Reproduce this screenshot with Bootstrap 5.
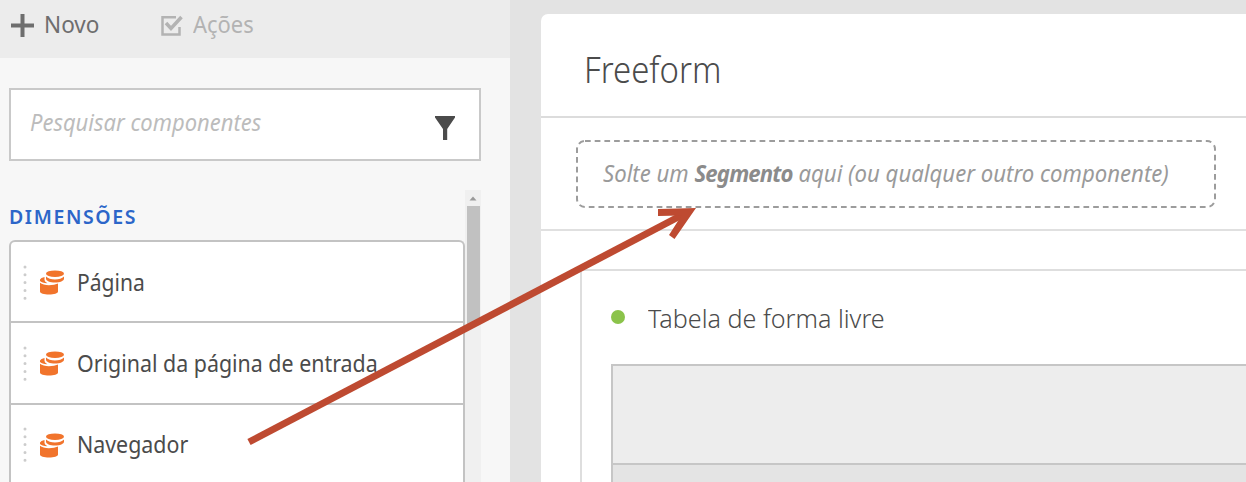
<!DOCTYPE html>
<html lang="pt-BR">
<head>
<meta charset="utf-8">
<meta name="viewport" content="width=device-width, initial-scale=1">
<title>Freeform</title>
<link href="https://cdn.jsdelivr.net/npm/bootstrap@5.3.0/dist/css/bootstrap.min.css" rel="stylesheet">
<style>
body{height:482px;background:#e3e3e3;font-family:"Noto Sans",sans-serif;font-size:23px;font-stretch:semi-condensed;line-height:30px;color:#4b4b4b;white-space:nowrap}
.side{width:510px;background:#f7f7f7}
.topbar{height:58px;background:#ececec;padding:9px 0 0 10px;color:#6e6e6e}
.topbar .novo{width:149px}
.off{color:#b3b3b3}
.search{width:472px;height:73px;margin:30px 0 0 9px;border:2px solid #c9c9c9;background:#fff;padding:17px 24px 0 19px;color:#bcbcbc}
.heading{font-size:19.5px;font-weight:600;color:#2c66c9;letter-spacing:1.6px;margin:13px 0 0 9px;line-height:28px}
.items{width:456px;border:2px solid #c3c3c3;border-radius:6px 6px 0 0;border-bottom:0;background:#fff;margin:9px 0 0 9px}
.item{height:81.5px;border-bottom:2px solid #c3c3c3;padding:2px 0 0 12px}
.item:first-child{height:81px}
.item svg{flex:none}
.item .coin{margin:0 13px 0 13px}
.scroller{width:16px;background:#f0f0f0;margin-top:29px}
.thumb{width:13px;height:118px;background:#c1c1c1;margin:0 1px 0 2px}
.main{margin-left:31px;margin-top:14px;background:#fff;border-radius:7px 0 0 0}
.title{height:104px;border-bottom:2px solid #dcdcdc;padding:30px 0 0 43px;font-size:37px;line-height:50px;font-weight:300}
.zone{height:113px;border-bottom:2px solid #e0e0e0;padding:22px 0 0 35px}
.drop{width:640px;height:68px;padding:18px 0 0 27px;color:#9a9a9a}
.drop b{color:#8b8b8b;letter-spacing:-.9px}
.panel{height:213px;margin:38px 0 0 39px;border:2px solid #dedede;border-width:2px 0 0 2px;padding:29px 0 0 29px}
.dot{width:14px;height:14px;border-radius:50%;background:#8bc34a;margin:-3px 23px 0 0}
.table-title{font-size:26px;line-height:36px;font-weight:300}
.grid{height:118px;margin-top:28px;border:2px solid #c6c6c6;border-width:2px 0 0 2px;background:#e4e4e4}
.grid-head{height:99px;background:#ededed;border-bottom:2px solid #c6c6c6}
.fit{display:inline-block;transform-origin:0 50%;transform:scaleX(.955)}
.item .fit{transform:scaleX(.93);padding-bottom:2px}
.item:first-child .fit{transform:scaleX(.915)}
.title .fit{transform:scaleX(.89)}
.table-title .fit{transform:scaleX(.966)}
.drop .fit{transform:scaleX(.963)}
.novo .fit{transform:scaleX(.98)}
</style>
<script src="https://cdn.jsdelivr.net/npm/bootstrap@5.3.0/dist/js/bootstrap.bundle.min.js"></script>
</head>
<body class="overflow-hidden position-relative d-flex">
<svg width="0" height="0" class="position-absolute">
  <symbol id="coins" viewBox="0 0 24 25">
    <path fill="#f1742c" d="M6 3.700a9 3.300 0 0 1 18 0a9 3.300 0 0 1-18 0zM6 6.500q3 3 9 3t9-3v2.200c0 2-4 3.800-9 3.800s-9-1.800-9-3.800zM0 9.500Q.8 7.500 4.500 7v3q.2 2 3 3.300Q1.500 12.700 0 11zM0 12.800q3 2.400 9 2.400 5.500 0 9-1.600V21.500c0 1.800-4 3-9 3s-9-1.200-9-3z"/>
  </symbol>
  <symbol id="grip" viewBox="0 0 4 36">
    <path stroke="#ccc" stroke-width="3" stroke-linecap="round" stroke-dasharray="0 7.800" d="M2 2v32"/>
  </symbol>
</svg>
<aside class="side flex-shrink-0 overflow-hidden">
  <div class="topbar d-flex align-items-start">
    <div class="novo d-flex"><svg width="24" height="25" class="mt-1" style="margin-right:10px"><path d="M12.500 1v23M1 12.500h23" stroke="#6e6e6e" stroke-width="4"/></svg><span class="fit">Novo</span></div>
    <div class="off d-flex"><svg width="24" height="24" style="margin:4px 10px 0 0" fill="none" stroke="#b3b3b3"><path stroke-width="2.500" d="M17 4.300H3.500v17.200H20.500V14"/><path stroke-width="3.500" d="M7 10l5 5.500L22.500 4"/></svg><span class="fit">Ações</span></div>
  </div>
  <div class="search d-flex justify-content-between"><i class="fit">Pesquisar componentes</i><svg width="20" height="24" style="margin-top:9px"><path fill="#4b4b4b" d="M0 0h20v1.500L12.200 13v11H8V13L0 1.500z"/></svg></div>
  <div class="d-flex">
    <div>
      <div style="height:29px"></div>
      <div class="heading">DIMENSÕES</div>
      <div class="items">
        <div class="item d-flex align-items-center"><svg width="4" height="36"><use href="#grip"/></svg><svg class="coin" width="24" height="25"><use href="#coins"/></svg><span class="fit">Página</span></div>
        <div class="item d-flex align-items-center"><svg width="4" height="36"><use href="#grip"/></svg><svg class="coin" width="24" height="25"><use href="#coins"/></svg><span class="fit">Original da página de entrada</span></div>
        <div class="item d-flex align-items-center"><svg width="4" height="36"><use href="#grip"/></svg><svg class="coin" width="24" height="25"><use href="#coins"/></svg><span class="fit">Navegador</span></div>
      </div>
    </div>
    <div class="scroller"><svg width="16" height="16" class="d-block"><path fill="#999" d="M4.500 10.500L8 6.500l3.500 4z"/></svg><div class="thumb"></div></div>
  </div>
</aside>
<main class="main flex-grow-1">
  <div class="title"><span class="fit">Freeform</span></div>
  <div class="zone"><div class="drop position-relative"><svg class="position-absolute top-0 start-0" width="640" height="68"><rect x="1" y="1" width="638" height="66" rx="8" fill="none" stroke="#9c9c9c" stroke-width="2" stroke-dasharray="5.700 4"/></svg><i class="fit">Solte um <b>Segmento</b> aqui (ou qualquer outro componente)</i></div></div>
  <div class="panel">
    <div class="d-flex align-items-center table-title"><span class="dot"></span><span class="fit">Tabela de forma livre</span></div>
    <div class="grid"><div class="grid-head"></div></div>
  </div>
</main>
<svg class="position-absolute top-0 start-0" width="1246" height="482"><path d="M249 442L685 213.500" stroke="#be4a31" stroke-width="7" fill="none"/><path fill="#be4a31" d="M658 209L696 208 674.500 239 669 235 678 221 682 215.500 658 216z"/></svg>
</body>
</html>
